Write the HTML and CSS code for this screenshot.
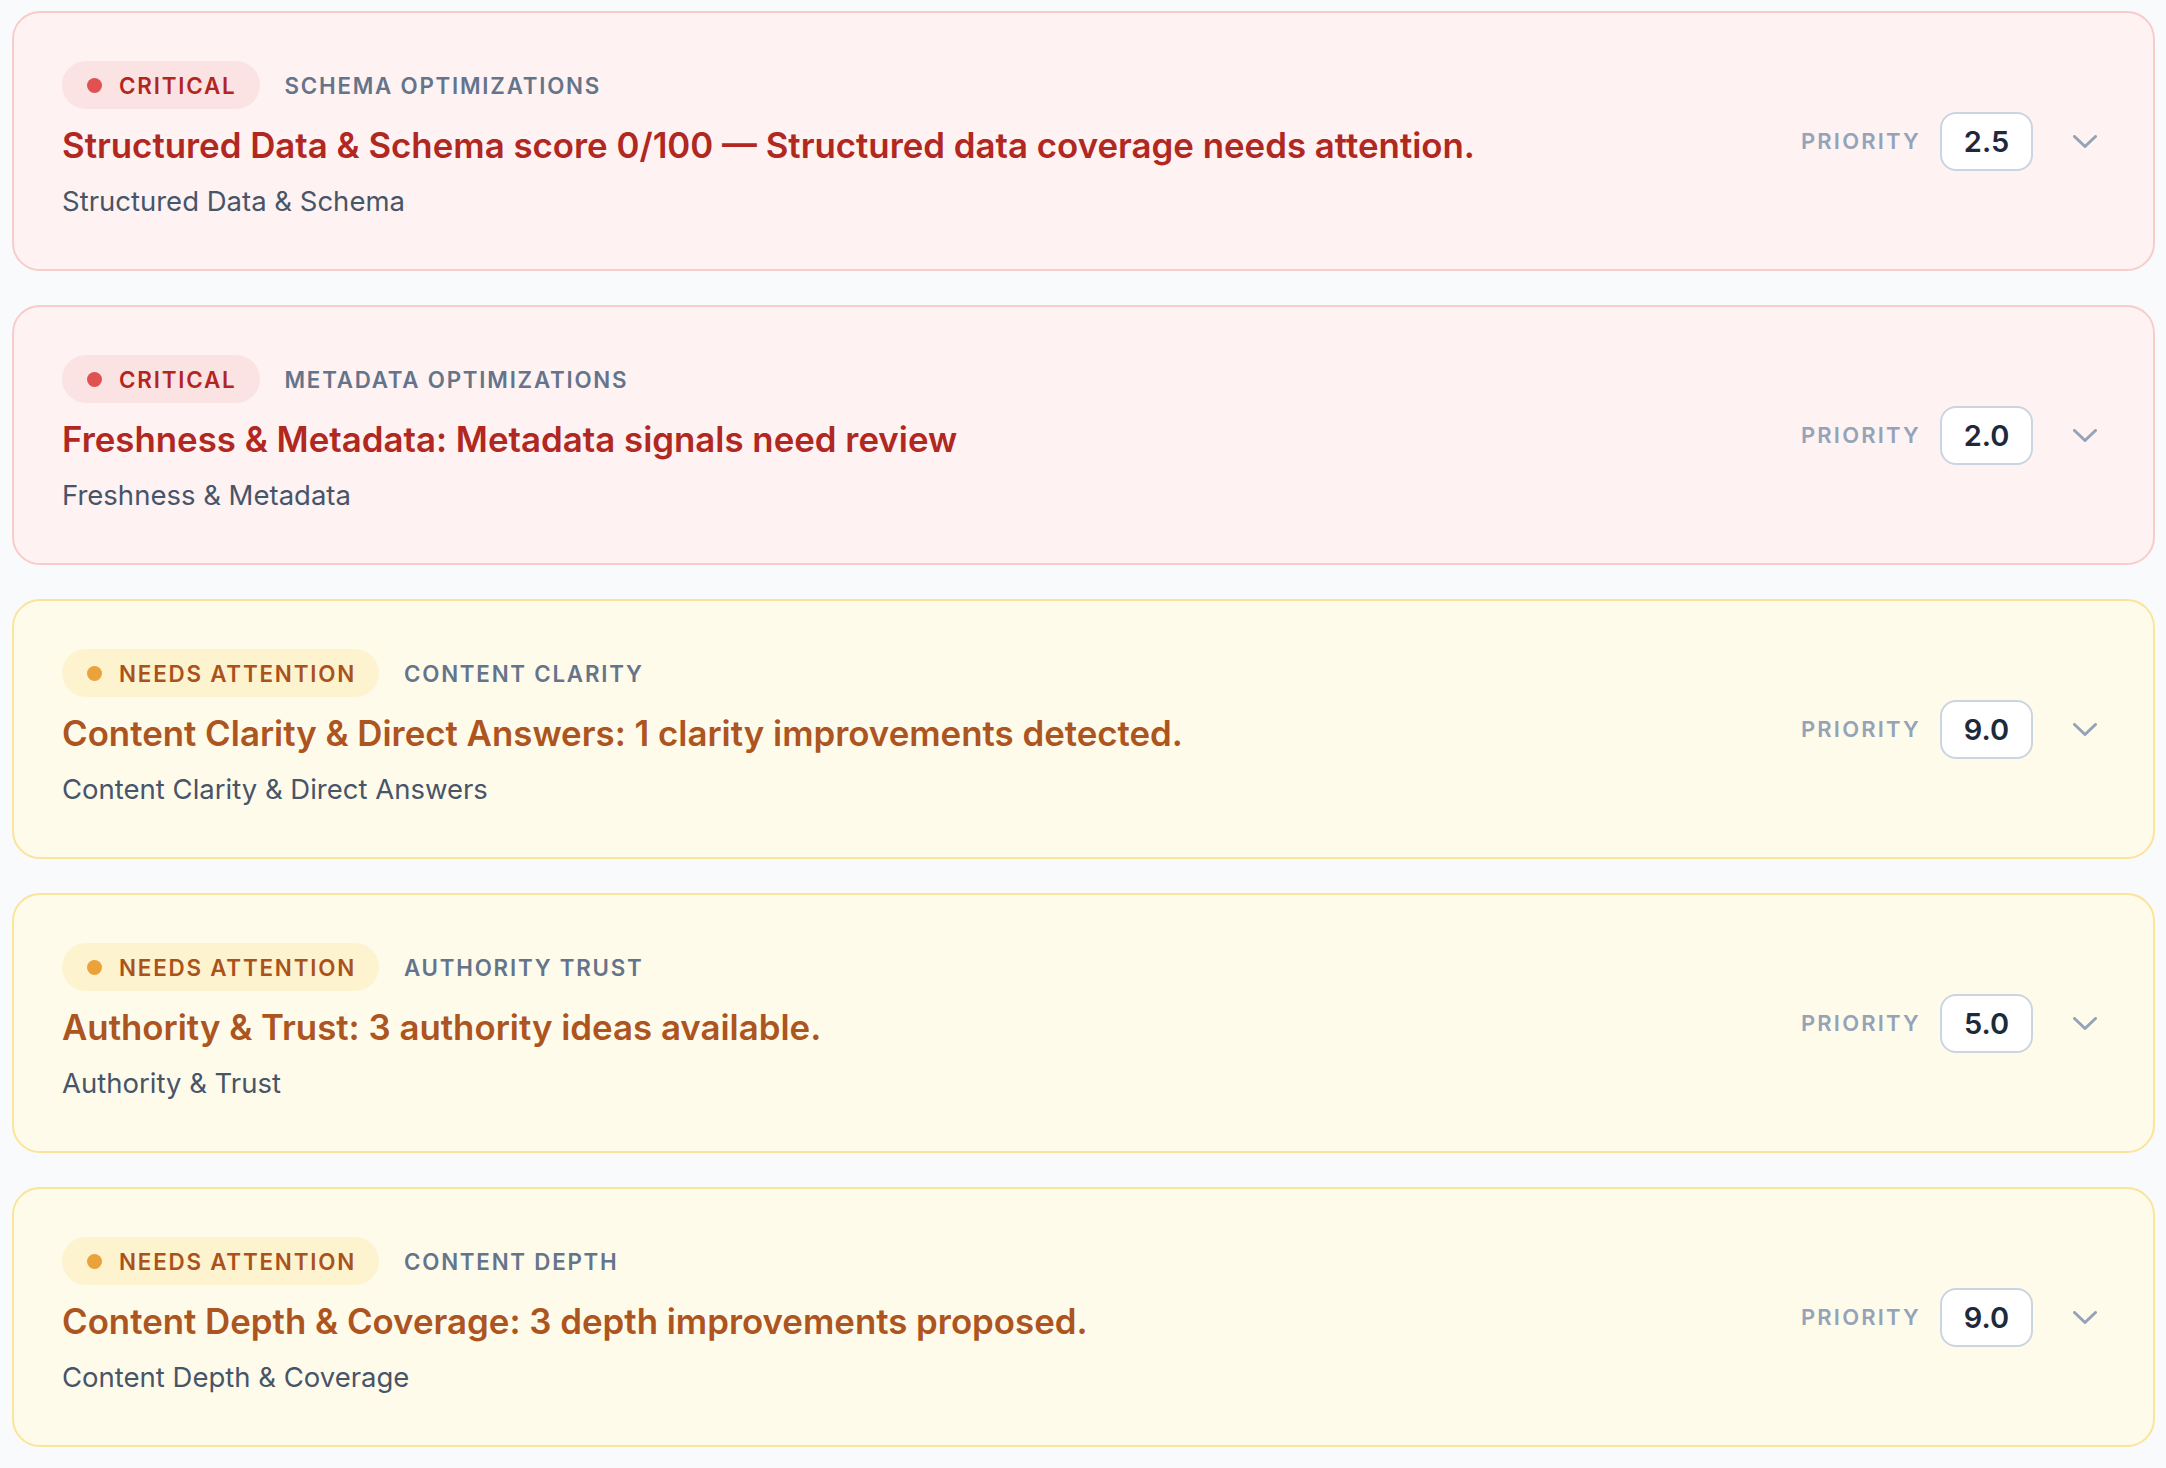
FILE: index.html
```html
<!DOCTYPE html>
<html lang="en">

<head>
    <meta charset="UTF-8">
    <meta name="viewport" content="width=device-width, initial-scale=1.0" />
    <title>Recommendations</title>
    <link rel="stylesheet" href="styles.css">
</head>

<body>
    <div class="list">

        <div class="card critical">
            <div class="card-main">
                <div class="tags">
                    <span class="pill"><span class="dot"></span>Critical</span>
                    <span class="category">Schema optimizations</span>
                </div>
                <h3 class="title">Structured Data &amp; Schema score 0/100 — Structured data coverage needs attention.</h3>
                <p class="subtitle">Structured Data &amp; Schema</p>
            </div>
            <div class="card-side">
                <span class="priority-label">Priority</span>
                <span class="priority-value">2.5</span>
                <button class="toggle" type="button" aria-label="Expand">
                    <svg width="24" height="13" viewBox="0 0 24 13"><polyline points="1.5,1.5 12,11.5 22.5,1.5" /></svg>
                </button>
            </div>
        </div>

        <div class="card critical">
            <div class="card-main">
                <div class="tags">
                    <span class="pill"><span class="dot"></span>Critical</span>
                    <span class="category">Metadata optimizations</span>
                </div>
                <h3 class="title">Freshness &amp; Metadata: Metadata signals need review</h3>
                <p class="subtitle">Freshness &amp; Metadata</p>
            </div>
            <div class="card-side">
                <span class="priority-label">Priority</span>
                <span class="priority-value">2.0</span>
                <button class="toggle" type="button" aria-label="Expand">
                    <svg width="24" height="13" viewBox="0 0 24 13"><polyline points="1.5,1.5 12,11.5 22.5,1.5" /></svg>
                </button>
            </div>
        </div>

        <div class="card warning">
            <div class="card-main">
                <div class="tags">
                    <span class="pill"><span class="dot"></span>Needs attention</span>
                    <span class="category">Content clarity</span>
                </div>
                <h3 class="title">Content Clarity &amp; Direct Answers: 1 clarity improvements detected.</h3>
                <p class="subtitle">Content Clarity &amp; Direct Answers</p>
            </div>
            <div class="card-side">
                <span class="priority-label">Priority</span>
                <span class="priority-value">9.0</span>
                <button class="toggle" type="button" aria-label="Expand">
                    <svg width="24" height="13" viewBox="0 0 24 13"><polyline points="1.5,1.5 12,11.5 22.5,1.5" /></svg>
                </button>
            </div>
        </div>

        <div class="card warning">
            <div class="card-main">
                <div class="tags">
                    <span class="pill"><span class="dot"></span>Needs attention</span>
                    <span class="category">Authority trust</span>
                </div>
                <h3 class="title">Authority &amp; Trust: 3 authority ideas available.</h3>
                <p class="subtitle">Authority &amp; Trust</p>
            </div>
            <div class="card-side">
                <span class="priority-label">Priority</span>
                <span class="priority-value">5.0</span>
                <button class="toggle" type="button" aria-label="Expand">
                    <svg width="24" height="13" viewBox="0 0 24 13"><polyline points="1.5,1.5 12,11.5 22.5,1.5" /></svg>
                </button>
            </div>
        </div>

        <div class="card warning">
            <div class="card-main">
                <div class="tags">
                    <span class="pill"><span class="dot"></span>Needs attention</span>
                    <span class="category">Content depth</span>
                </div>
                <h3 class="title">Content Depth &amp; Coverage: 3 depth improvements proposed.</h3>
                <p class="subtitle">Content Depth &amp; Coverage</p>
            </div>
            <div class="card-side">
                <span class="priority-label">Priority</span>
                <span class="priority-value">9.0</span>
                <button class="toggle" type="button" aria-label="Expand">
                    <svg width="24" height="13" viewBox="0 0 24 13"><polyline points="1.5,1.5 12,11.5 22.5,1.5" /></svg>
                </button>
            </div>
        </div>

    </div>
</body>

</html>
```

FILE: styles.css
```css
* {
    box-sizing: border-box;
    margin: 0;
    padding: 0;
    font-family: Inter, 'Noto Sans', 'Liberation Sans', sans-serif;
}

body {
    background: #f8fafc;
}

.list {
    display: flex;
    flex-direction: column;
    gap: 34px;
    padding: 11px 11px 11px 12px;
}

/* card */

.card {
    display: flex;
    align-items: center;
    gap: 40px;
    padding: 48px;
    border: 2px solid;
    border-radius: 28px;
}

.card.critical {
    background: #fef2f2;
    border-color: #f9cbcb;
}

.card.warning {
    background: #fffbeb;
    border-color: #fbe49a;
}

.card-main {
    flex: 1;
    min-width: 0;
}

.tags {
    display: flex;
    align-items: center;
    gap: 25px;
}

.pill {
    display: inline-flex;
    align-items: center;
    gap: 17px;
    height: 48px;
    padding: 0 23px 0 25px;
    border-radius: 24px;
    font-size: 22.4px;
    font-weight: 600;
    letter-spacing: 0.08em;
    text-transform: uppercase;
}

.dot {
    width: 15px;
    height: 15px;
    border-radius: 50%;
}

.critical .pill {
    background: #fbe3e3;
    color: #b3261e;
}

.critical .dot {
    background: #e05252;
}

.warning .pill {
    background: #fdf3cf;
    color: #a9521b;
}

.warning .dot {
    background: #eba23a;
}

.category {
    font-size: 22.3px;
    font-weight: 600;
    letter-spacing: 0.08em;
    text-transform: uppercase;
    color: #64748b;
}

.title {
    margin-top: 14px;
    font-size: 34.85px;
    line-height: 44px;
    font-weight: 600;
}

.critical .title {
    color: #b0281f;
}

.warning .title {
    color: #ad5520;
}

.subtitle {
    margin-top: 14px;
    font-size: 27.5px;
    line-height: 40px;
    color: #475569;
}

/* priority */

.card-side {
    display: flex;
    align-items: center;
}

.priority-label {
    margin-right: 19px;
    font-size: 22px;
    font-weight: 600;
    letter-spacing: 0.1em;
    text-transform: uppercase;
    color: #94a3b8;
}

.priority-value {
    display: flex;
    align-items: center;
    justify-content: center;
    width: 93px;
    height: 59px;
    background: #ffffff;
    border: 2px solid #cbd5e1;
    border-radius: 16px;
    font-size: 29px;
    font-weight: 600;
    color: #1e293b;
}

.toggle {
    display: flex;
    align-items: center;
    justify-content: center;
    width: 40px;
    height: 40px;
    margin-left: 32px;
    background: none;
    border: none;
}

.toggle svg polyline {
    fill: none;
    stroke: #94a3b8;
    stroke-width: 3;
    stroke-linecap: round;
    stroke-linejoin: round;
}
```
